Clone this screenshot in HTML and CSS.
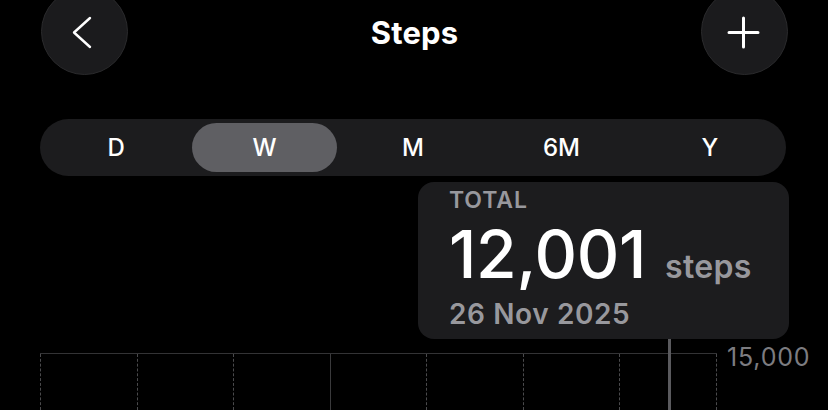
FILE: index.html
```html
<!DOCTYPE html>
<html lang="en">
<head>
    <meta charset="UTF-8">
    <meta name="viewport" content="width=device-width, initial-scale=1.0">
    <title>Steps</title>
    <link rel="stylesheet" href="styles.css">
</head>
<body>
    <div class="screen">
        <header class="top-bar">
            <button class="round-button" aria-label="Back">
                <svg width="87" height="87" viewBox="0 0 87 87">
                    <path d="M49 30 L33 44.5 L49 59" fill="none" stroke="#fff" stroke-width="2.4" stroke-linecap="round" stroke-linejoin="round"/>
                </svg>
            </button>
            <h1 class="title">Steps</h1>
            <button class="round-button" aria-label="Add">
                <svg width="87" height="87" viewBox="0 0 87 87">
                    <path d="M28 44.5 H57 M42.5 30 V59" fill="none" stroke="#fff" stroke-width="3" stroke-linecap="round"/>
                </svg>
            </button>
        </header>

        <div class="segments">
            <span class="segment">D</span>
            <span class="segment selected">W</span>
            <span class="segment">M</span>
            <span class="segment">6M</span>
            <span class="segment">Y</span>
        </div>

        <div class="summary-card">
            <div class="summary-label">TOTAL</div>
            <div class="summary-value">
                <span class="number">12,001</span>
                <span class="unit">steps</span>
            </div>
            <div class="summary-date">26 Nov 2025</div>
        </div>

        <div class="chart">
            <div class="chart-grid">
                <div class="col"></div>
                <div class="col"></div>
                <div class="col"></div>
                <div class="col solid"></div>
                <div class="col"></div>
                <div class="col"></div>
                <div class="col last"></div>
                <div class="selector"></div>
            </div>
            <div class="axis-label">15,000</div>
        </div>
    </div>
</body>
</html>
```

FILE: styles.css
```css
body {
    margin: 0;
    background: #000;
    color: #fff;
    font-family: Inter, "Noto Sans", sans-serif;
    overflow: hidden;
}
.screen {
    width: 828px;
    height: 410px;
    padding: 0 40px;
    box-sizing: border-box;
    overflow: hidden;
}
.top-bar {
    display: flex;
    align-items: center;
    justify-content: space-between;
    margin-top: -12px;
    padding-left: 1px;
}
.round-button {
    width: 87px;
    height: 87px;
    padding: 0;
    border: 1px solid #2a2a2c;
    border-radius: 50%;
    background: #1b1b1d;
    display: flex;
    align-items: center;
    justify-content: center;
}
.round-button svg {
    display: block;
    flex: none;
}
.title {
    margin: 0;
    font-size: 31px;
    font-weight: 700;
    letter-spacing: 0.2px;
    padding-top: 2px;
}
.segments {
    margin-top: 44px;
    height: 57px;
    box-sizing: border-box;
    padding: 4px;
    display: flex;
    gap: 4px;
    background: #1c1c1e;
    border-radius: 29px;
    margin-right: 2px;
}
.segment {
    flex: 1;
    display: flex;
    align-items: center;
    justify-content: center;
    font-size: 24px;
    font-weight: 500;
    border-radius: 25px;
}
.segment.selected {
    background: #5f5f63;
}
.summary-card {
    margin-top: 6px;
    margin-left: auto;
    margin-right: -1px;
    width: 371px;
    height: 157px;
    box-sizing: border-box;
    padding: 5px 0 0 31px;
    background: #1c1c1e;
    border-radius: 16px;
}
.summary-label {
    font-size: 23px;
    font-weight: 600;
    color: #98989d;
    line-height: 26px;
    letter-spacing: 0.9px;
}
.summary-value {
    display: flex;
    align-items: baseline;
    gap: 19px;
    line-height: 56px;
    margin-top: 13px;
}
.number {
    font-size: 66px;
    font-weight: 500;
    letter-spacing: -0.3px;
}
.unit {
    font-size: 32px;
    font-weight: 600;
    color: #98989d;
    letter-spacing: 0.3px;
}
.summary-date {
    font-size: 28px;
    font-weight: 600;
    color: #98989d;
    line-height: 32px;
    margin-top: 3px;
    letter-spacing: 0.6px;
}
.chart {
    display: flex;
    align-items: flex-start;
    margin-top: 14px;
}
.chart-grid {
    position: relative;
    flex: none;
    width: 677px;
    height: 56px;
    display: flex;
    border-top: 1px solid #333335;
}
.col {
    flex: 1;
    border-left: 1px dashed #4a4a4c;
}
.col.solid {
    border-left-style: solid;
    border-left-color: #3a3a3c;
}
.col.last {
    border-right: 1px dashed #4a4a4c;
}
.selector {
    position: absolute;
    left: 628px;
    top: -15px;
    width: 3px;
    height: 80px;
    background: #5a5a5e;
}
.axis-label {
    flex: none;
    margin-left: 10px;
    margin-top: -11px;
    font-size: 25px;
    font-weight: 400;
    color: #7c7c80;
    letter-spacing: 0.8px;
}
```
